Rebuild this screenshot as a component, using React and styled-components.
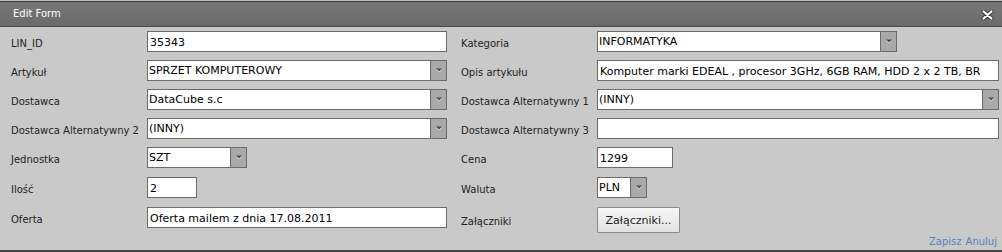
import React from "react";
import styled, { createGlobalStyle } from "styled-components";

const Global = createGlobalStyle`
  html, body { margin: 0; padding: 0; background: #c9c9c9; }
  body { font-family: "DejaVu Sans", Verdana, sans-serif; }
`;

const Dialog = styled.div`
  width: 1002px;
  display: flex;
  flex-direction: column;
  background: #c9c9c9;
  border-bottom: 2px solid #444;
`;

const TopStrip = styled.div`
  height: 1px;
  background: #bdbdbd;
`;

const TitleBar = styled.div`
  height: 24px;
  display: flex;
  align-items: center;
  justify-content: space-between;
  padding: 0 8px 0 13px;
  background: linear-gradient(#777777, #6a6a6a);
  border-top: 1px solid #3e3e3e;
  border-bottom: 1px solid #4a4a4a;
`;

const Title = styled.span`
  color: #fff;
  font-size: 10px;
  line-height: 24px;
`;

const Close = styled.svg`
  width: 13px;
  height: 10px;
  margin-top: 2px;
`;

const FormGrid = styled.div`
  display: grid;
  grid-template-columns: 136px 314px 136px 402px;
  grid-template-rows: 21px 21px 21px 21px 22px 22px 26px;
  row-gap: 8px;
  padding: 4px 3px 0 11px;
`;

const Label = styled.div`
  align-self: start;
  font-size: 10px;
  line-height: 12px;
  color: #222;
  white-space: nowrap;
  margin-top: ${(p) => p.$mt ?? 7}px;
`;

const TextInput = styled.input`
  box-sizing: border-box;
  align-self: start;
  width: ${(p) => p.$w}px;
  height: 21px;
  margin: 0;
  padding: 1px 2px 0 2px;
  border: 1px solid #6b6b6b;
  border-radius: 0;
  background: #fff;
  color: #000;
  font-family: "DejaVu Sans", Verdana, sans-serif;
  font-size: 11px;
  outline: none;
`;

const SelectBox = styled.div`
  box-sizing: border-box;
  align-self: start;
  width: ${(p) => p.$w}px;
  height: 21px;
  display: flex;
  border: 1px solid #6b6b6b;
  background: #fff;
`;

const SelectValue = styled.div`
  flex: 1;
  padding-left: 1px;
  font-size: 11px;
  line-height: 19px;
  color: #000;
  white-space: nowrap;
  overflow: hidden;
`;

const ArrowButton = styled.div`
  width: 15px;
  display: flex;
  align-items: center;
  justify-content: center;
  background: #a9a9a9;
  border-left: 1px solid #6b6b6b;
`;

const Button = styled.button`
  align-self: start;
  width: 83px;
  height: 26px;
  margin: 0;
  padding: 0;
  border: 1px solid #8a8a8a;
  border-radius: 1px;
  background: linear-gradient(#f6f6f6, #e2e2e2);
  color: #1e1e1e;
  font-family: "DejaVu Sans", Verdana, sans-serif;
  font-size: 11px;
`;

const Footer = styled.div`
  display: flex;
  justify-content: flex-end;
  gap: 4px;
  margin-top: 3px;
  padding: 0 5px 2px 0;
  height: 12px;
`;

const Link = styled.a`
  font-size: 10px;
  line-height: 12px;
  color: #5b80bb;
  text-decoration: none;
  cursor: pointer;
`;

const Arrow = () => (
  <svg width="8" height="6" viewBox="0 0 8 6">
    <polygon points="1,1.5 7,1.5 4,4.5" fill="#e4e4e4" />
    <polygon points="1,0.5 7,0.5 4,3.5" fill="#4a4a4a" />
  </svg>
);

const Select = ({ w, value }) => (
  <SelectBox $w={w}>
    <SelectValue>{value}</SelectValue>
    <ArrowButton>
      <Arrow />
    </ArrowButton>
  </SelectBox>
);

export default function App() {
  return (
    <>
      <Global />
      <Dialog>
        <TopStrip />
        <TitleBar>
          <Title>Edit Form</Title>
          <Close viewBox="0 0 13 10">
            <path d="M2.5 1.5 L10.5 8.5 M10.5 1.5 L2.5 8.5" stroke="#3d3d3d" strokeWidth="4.2" strokeLinecap="round" />
            <path d="M2.5 1.5 L10.5 8.5 M10.5 1.5 L2.5 8.5" stroke="#ffffff" strokeWidth="2.2" strokeLinecap="round" />
          </Close>
        </TitleBar>
        <FormGrid>
          <Label>LIN_ID</Label>
          <TextInput $w={300} defaultValue="35343" readOnly />
          <Label>Kategoria</Label>
          <Select w={300} value="INFORMATYKA" />

          <Label>Artykuł</Label>
          <Select w={300} value="SPRZET KOMPUTEROWY" />
          <Label>Opis artykułu</Label>
          <TextInput $w={402} defaultValue="Komputer marki EDEAL , procesor 3GHz, 6GB RAM, HDD 2 x 2 TB, BR" readOnly />

          <Label>Dostawca</Label>
          <Select w={300} value="DataCube s.c" />
          <Label>Dostawca Alternatywny 1</Label>
          <Select w={402} value="(INNY)" />

          <Label>Dostawca Alternatywny 2</Label>
          <Select w={300} value="(INNY)" />
          <Label>Dostawca Alternatywny 3</Label>
          <TextInput $w={402} defaultValue="" readOnly />

          <Label>Jednostka</Label>
          <Select w={100} value="SZT" />
          <Label>Cena</Label>
          <TextInput $w={76} defaultValue="1299" readOnly />

          <Label>Ilość</Label>
          <TextInput $w={50} defaultValue="2" readOnly />
          <Label>Waluta</Label>
          <Select w={50} value="PLN" />

          <Label>Oferta</Label>
          <TextInput $w={300} defaultValue="Oferta mailem z dnia 17.08.2011" readOnly />
          <Label $mt={9}>Załączniki</Label>
          <Button>Załączniki...</Button>
        </FormGrid>
        <Footer>
          <Link>Zapisz</Link>
          <Link>Anuluj</Link>
        </Footer>
      </Dialog>
    </>
  );
}
